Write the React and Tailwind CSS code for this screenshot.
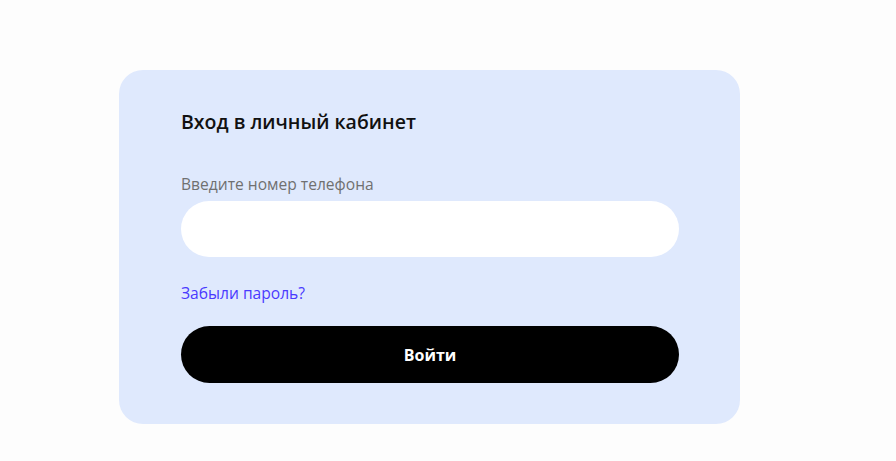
export default function App() {
  return (
    <div className="min-h-[461px] w-full bg-[#fdfdfd] pt-[70px] pl-[119px]" style={{ fontFamily: '"Open Sans", "Noto Sans", sans-serif' }}>
      <div className="w-[621px] h-[354px] rounded-[24px] bg-[#dfe9fd] pt-[38px] box-border px-[62px]">
        <h1 className="text-[19.5px] leading-[28px] font-semibold text-[#111111]">Вход в личный кабинет</h1>
        <label className="block mt-[36px] text-[15.6px] leading-[24px] text-[#707070]">Введите номер телефона</label>
        <input type="tel" className="mt-[5px] block w-[498px] h-[56px] rounded-full bg-white outline-none px-6" />
        <a href="#" className="block mt-[24px] text-[15.6px] leading-[24px] text-[#4a3aff]">Забыли пароль?</a>
        <button className="mt-[21px] block w-[498px] h-[57px] rounded-full bg-black text-white text-[16px] font-bold">Войти</button>
      </div>
    </div>
  );
}
